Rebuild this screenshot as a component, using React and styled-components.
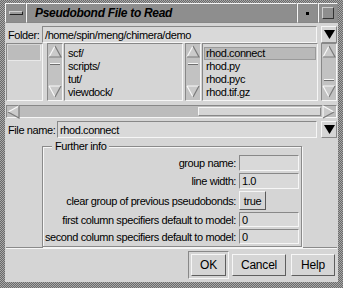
import React from 'react';
import styled, { createGlobalStyle, css } from 'styled-components';

const GlobalStyle = createGlobalStyle`
  html, body { margin: 0; padding: 0; background: #7c7c7c; }
  * { box-sizing: border-box; }
`;

const BG = '#d5d5d5';
const LIGHT = '#f6f6f6';
const DARK = '#888888';

const raised = css`
  border-top: 1px solid ${LIGHT};
  border-left: 1px solid ${LIGHT};
  border-bottom: 1px solid ${DARK};
  border-right: 1px solid ${DARK};
`;

const sunken = css`
  border-top: 1px solid ${DARK};
  border-left: 1px solid ${DARK};
  border-bottom: 1px solid ${LIGHT};
  border-right: 1px solid ${LIGHT};
`;

const Frame = styled.div`
  width: 343px;
  height: 288px;
  padding: 3px 5px 6px 5px;
  background-color: #8a8a8a;
  background-image: repeating-conic-gradient(#6a6a6a 0 25%, #a8a8a8 0 50%);
  background-size: 2px 2px;
  display: flex;
  flex-direction: column;
  font-family: "Liberation Sans", Arial, sans-serif;
  font-size: 11px;
  letter-spacing: -0.4px;
  color: #000;
`;

const TitleBar = styled.div`
  height: 20px;
  display: flex;
  background: #8e8e8e;
`;

const TitleButton = styled.div`
  ${raised};
  width: ${p => p.$w}px;
  display: flex;
  align-items: center;
  justify-content: center;
  background: #8e8e8e;
`;

const MenuBar = styled.div`
  width: 14px;
  height: 4px;
  background: #9a9a9a;
  border-top: 1px solid #cfcfcf;
  border-left: 1px solid #cfcfcf;
  border-bottom: 1px solid #222;
  border-right: 1px solid #222;
`;

const Dot = styled.div`
  width: 3px;
  height: 3px;
  background: #000;
`;

const MaxBox = styled.div`
  width: 12px;
  height: 12px;
  border-top: 1px solid #cfcfcf;
  border-left: 1px solid #cfcfcf;
  border-bottom: 1px solid #333;
  border-right: 1px solid #333;
`;

const Title = styled.div`
  ${raised};
  flex: 1;
  padding-left: 8px;
  display: flex;
  align-items: center;
  font-size: 12px;
  font-weight: bold;
  font-style: italic;
  letter-spacing: -0.3px;
`;

const Body = styled.div`
  flex: 1;
  background: ${BG};
  padding: 3px 1px 0 1px;
  display: flex;
  flex-direction: column;
`;

const FieldRow = styled.div`
  height: 17px;
  display: flex;
  align-items: stretch;
  margin-top: ${p => p.$mt || 0}px;
`;

const RowLabel = styled.div`
  width: ${p => p.$w}px;
  padding-left: 2px;
  display: flex;
  align-items: center;
`;

const TextField = styled.div`
  ${sunken};
  width: ${p => p.$w}px;
  background: #d9d9d9;
  padding-left: 2px;
  display: flex;
  align-items: center;
`;

const ArrowButton = styled.div`
  ${raised};
  width: 16px;
  margin-left: ${p => p.$ml}px;
  display: flex;
  align-items: center;
  justify-content: center;
`;

const ListsRow = styled.div`
  height: 58px;
  display: flex;
`;

const List = styled.div`
  ${sunken};
  width: ${p => p.$w}px;
  margin-left: ${p => p.$ml || 0}px;
  background: ${BG};
  padding: 3px 1px 0 1px;
  display: flex;
  flex-direction: column;
`;

const Item = styled.div`
  height: 13px;
  line-height: 12px;
  padding-left: 2px;
  white-space: nowrap;
  ${p => p.$selected && css`
    background: #b9b9b9;
    border: 1px solid #9a9a9a;
    line-height: 10px;
    padding-left: 1px;
  `}
`;

const BlankSelected = styled.div`
  height: 16px;
  margin: -2px 0 0 0;
  background: #bcbcbc;
  border-bottom: 1px solid #e8e8e8;
  border-right: 1px solid #e8e8e8;
`;

const VScroll = styled.div`
  ${sunken};
  width: 16px;
  margin-left: ${p => p.$ml || 0}px;
  background: #c2c2c2;
  display: flex;
  flex-direction: column;
  align-items: center;
  padding: 1px 0;
`;

const Trough = styled.div`
  flex: 1;
  width: 100%;
  display: flex;
  flex-direction: column;
  justify-content: ${p => (p.$end ? 'flex-end' : 'flex-start')};
  padding: ${p => (p.$end ? '0 0 4px' : '4px 0 0')};
`;

const Grip = styled.div`
  height: 2px;
  margin: 0 2px;
  border-top: 1px solid ${LIGHT};
  border-bottom: 1px solid #6e6e6e;
`;

const HScroll = styled.div`
  ${sunken};
  height: 13px;
  margin-top: 4px;
  background: #bcbcbc;
  display: flex;
  align-items: center;
`;

const HTrough = styled.div`
  flex: 1;
  height: 100%;
  display: flex;
  justify-content: flex-end;
  padding: 1px 1px 1px 0;
`;

const HThumb = styled.div`
  ${raised};
  width: 123px;
  background: ${BG};
`;

const Group = styled.div`
  position: relative;
  margin: 8px 0 0 36px;
  width: 260px;
  height: 101px;
  border: 1px solid #8a8a8a;
  box-shadow: inset 1px 1px 0 ${LIGHT}, 1px 1px 0 ${LIGHT};
  padding: 8px 2px 0 0;
  display: grid;
  grid-template-columns: 1fr 60px;
  grid-auto-rows: auto;
  column-gap: 3px;
  row-gap: 2px;
  align-content: start;
`;

const Legend = styled.div`
  position: absolute;
  top: -7px;
  left: 9px;
  padding: 0 3px;
  background: ${BG};
  line-height: 12px;
`;

const OptLabel = styled.div`
  height: ${p => p.$h}px;
  display: flex;
  align-items: center;
  justify-content: flex-end;
  white-space: nowrap;
`;

const OptField = styled.div`
  ${sunken};
  height: ${p => p.$h}px;
  background: #d9d9d9;
  padding-left: 2px;
  display: flex;
  align-items: center;
`;

const ToggleButton = styled.div`
  ${raised};
  height: ${p => p.$h}px;
  width: 27px;
  display: flex;
  align-items: center;
  justify-content: center;
  border-right-color: #5a5a5a;
  border-bottom-color: #5a5a5a;
`;

const Separator = styled.div`
  height: 2px;
  margin-top: 0;
  border-top: 1px solid #8a8a8a;
  border-bottom: 1px solid ${LIGHT};
`;

const ButtonRow = styled.div`
  height: 28px;
  margin-top: 2px;
  padding-right: 2px;
  display: flex;
  justify-content: flex-end;
  align-items: center;
`;

const DefaultRing = styled.div`
  ${sunken};
  width: 41px;
  height: 28px;
  display: flex;
  align-items: center;
  justify-content: center;
`;

const Button = styled.div`
  ${raised};
  border-right-color: #5e5e5e;
  border-bottom-color: #5e5e5e;
  width: ${p => p.$w}px;
  height: 22px;
  margin-left: ${p => p.$ml || 0}px;
  display: flex;
  align-items: center;
  justify-content: center;
  font-size: 12px;
  letter-spacing: -0.2px;
`;

const DownTriangle = () => (
  <svg width="11" height="9" viewBox="0 0 11 9">
    <polygon points="0,0 11,0 5.5,9" fill="#000" />
  </svg>
);

const ScrollArrow = ({ dir }) => {
  const pts = {
    up: { tri: '1,12 7,1 13,12', light: 'M1,12 L7,1', dark: 'M7,1 L13,12 L1,12' },
    down: { tri: '1,1 13,1 7,12', light: 'M1,1 L13,1 M1,1 L7,12', dark: 'M13,1 L7,12' },
    left: { tri: '12,1 1,7 12,13', light: 'M12,1 L1,7', dark: 'M1,7 L12,13 L12,1' },
    right: { tri: '1,1 12,7 1,13', light: 'M1,13 L1,1 L12,7', dark: 'M12,7 L1,13' },
  }[dir];
  return (
    <svg width="14" height="14" viewBox="0 0 14 14">
      <polygon points={pts.tri} fill="#cacaca" />
      <path d={pts.light} stroke="#f8f8f8" strokeWidth="1.2" fill="none" />
      <path d={pts.dark} stroke="#7a7a7a" strokeWidth="1.2" fill="none" />
    </svg>
  );
};

const Scrollbar = ({ ml, end }) => (
  <VScroll $ml={ml}>
    <ScrollArrow dir="up" />
    <Trough $end={end}>
      <Grip />
    </Trough>
    <ScrollArrow dir="down" />
  </VScroll>
);

const dirs = ['scf/', 'scripts/', 'tut/', 'viewdock/'];
const files = ['rhod.connect', 'rhod.py', 'rhod.pyc', 'rhod.tif.gz'];

const options = [
  { label: 'group name:', value: '', h: 16 },
  { label: 'line width:', value: '1.0', h: 16 },
  { label: 'clear group of previous pseudobonds:', toggle: 'true', h: 19 },
  { label: 'first column specifiers default to model:', value: '0', h: 15 },
  { label: 'second column specifiers default to model:', value: '0', h: 15 },
];

export default function App() {
  return (
    <Frame>
      <GlobalStyle />
      <TitleBar>
        <TitleButton $w={21}>
          <MenuBar />
        </TitleButton>
        <Title>Pseudobond File to Read</Title>
        <TitleButton $w={21}>
          <Dot />
        </TitleButton>
        <TitleButton $w={20}>
          <MaxBox />
        </TitleButton>
      </TitleBar>
      <Body>
        <FieldRow>
          <RowLabel $w={36}>Folder:</RowLabel>
          <TextField $w={275}>/home/spin/meng/chimera/demo</TextField>
          <ArrowButton $ml={4}>
            <DownTriangle />
          </ArrowButton>
        </FieldRow>

        <ListsRow>
          <List $w={37}>
            <BlankSelected />
          </List>
          <Scrollbar ml={4} />
          <List $w={119} $ml={1}>
            {dirs.map(d => (
              <Item key={d}>{d}</Item>
            ))}
          </List>
          <Scrollbar ml={2} />
          <List $w={116} $ml={1}>
            {files.map((f, i) => (
              <Item key={f} $selected={i === 0}>
                {f}
              </Item>
            ))}
          </List>
          <Scrollbar ml={3} end />
        </ListsRow>

        <HScroll>
          <ScrollArrow dir="left" />
          <HTrough>
            <HThumb />
          </HTrough>
          <ScrollArrow dir="right" />
        </HScroll>

        <FieldRow $mt={3}>
          <RowLabel $w={51}>File name:</RowLabel>
          <TextField $w={260}>rhod.connect</TextField>
          <ArrowButton $ml={4}>
            <DownTriangle />
          </ArrowButton>
        </FieldRow>

        <Group>
          <Legend>Further info</Legend>
          {options.map(o => (
            <React.Fragment key={o.label}>
              <OptLabel $h={o.h}>{o.label}</OptLabel>
              {o.toggle ? (
                <div>
                  <ToggleButton $h={o.h}>{o.toggle}</ToggleButton>
                </div>
              ) : (
                <OptField $h={o.h}>{o.value}</OptField>
              )}
            </React.Fragment>
          ))}
        </Group>

        <Separator />

        <ButtonRow>
          <DefaultRing>
            <Button $w={35}>OK</Button>
          </DefaultRing>
          <Button $w={54} $ml={3}>Cancel</Button>
          <Button $w={44} $ml={5}>Help</Button>
        </ButtonRow>
      </Body>
    </Frame>
  );
}
